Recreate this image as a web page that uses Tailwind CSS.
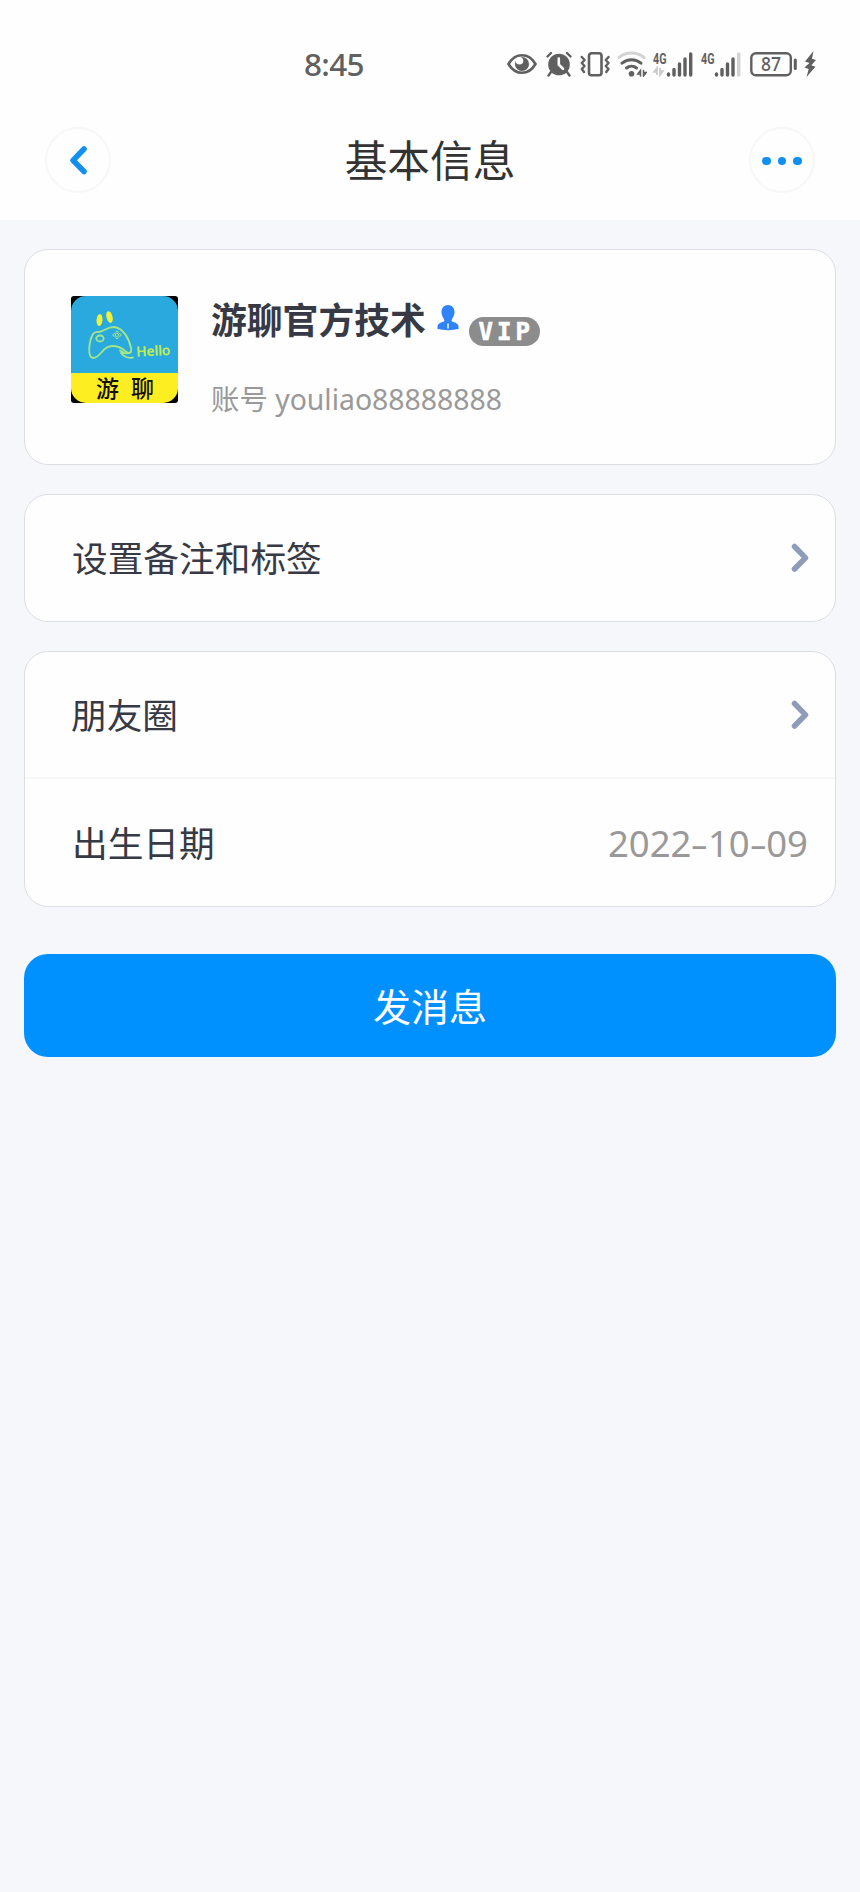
<!DOCTYPE html>
<html lang="zh-CN">

<head>
    <meta charset="UTF-8">
    <meta name="viewport" content="width=device-width, initial-scale=1.0">
    <script src="https://cdn.jsdelivr.net/npm/@tailwindcss/browser@4"></script>
    <title>基本信息</title>
</head>

<body class="bg-[#f5f7fb] min-h-screen text-[#373a44] font-['Noto_Sans','Noto_Sans_CJK_SC',sans-serif]">
    <header class="bg-[#fefefe] h-[220px]">
        <!-- Status bar -->
        <div class="flex items-center h-[127px] pl-[304px] pr-[44px] text-[#606060]">
            <span class="text-[31.5px] leading-none tracking-[-0.7px] font-medium">8:45</span>
            <div class="ml-auto flex items-center">
                <!-- Eye -->
                <svg class="w-[30px] h-[26px]" viewBox="0 0 30 26" fill="none">
                    <path d="M1.500 13C5 7 10 4.200 15 4.200S25 7 28.500 13C25 19 20 21.800 15 21.800S5 19 1.500 13Z" stroke="currentColor" stroke-width="2.600" />
                    <circle cx="15" cy="13" r="7" fill="currentColor" />
                    <circle cx="12.500" cy="9.800" r="3.800" fill="#fefefe" />
                </svg>
                <!-- Alarm -->
                <svg class="w-[26px] h-[26px] ml-[9px]" viewBox="0 0 26 26" fill="none" stroke-linecap="round">
                    <circle cx="13" cy="13.500" r="10.800" fill="currentColor" />
                    <path d="M1.500 5.500 5 2M24.500 5.500 21 2M5 21l-2.500 3.500M21 21l2.500 3.500" stroke="currentColor" stroke-width="2.400" />
                    <path d="M12.800 7.500v6.300l4.200 4" stroke="#fefefe" stroke-width="2.600" />
                </svg>
                <!-- Vibrate -->
                <svg class="w-[30px] h-[26px] ml-[8px]" viewBox="0 0 30 26" fill="none" stroke="currentColor" stroke-linejoin="round" stroke-linecap="round">
                    <rect x="9" y="2.300" width="12.500" height="22" rx="2.500" stroke-width="2.600" />
                    <path d="M1.800 6 4.500 9 1.800 12 4.500 15 1.800 18 4 21M28.500 6 25.800 9 28.500 12 25.800 15 28.500 18 26.300 21" stroke-width="2.400" />
                </svg>
                <!-- Wifi -->
                <svg class="w-[30px] h-[26px] ml-[7px]" viewBox="0 0 30 26" fill="none" stroke-linecap="round">
                    <path d="M2 6.500C9 .5 20 .5 27 6.500" stroke="#d3d3d3" stroke-width="3" />
                    <path d="M5 12.200C10.500 7.500 18.500 7.500 24 12.200M9.500 17C12.500 14.500 16.500 14.500 19.500 17" stroke="currentColor" stroke-width="3" />
                    <circle cx="14.500" cy="22.700" r="2.800" fill="currentColor" />
                    <path d="M23.500 25v-5.500L20.800 23h2.500M26.500 19.500V25l2.700-3.500h-2.500" stroke="currentColor" stroke-width="1.500" />
                </svg>
                <!-- Signal 1 -->
                <svg class="w-[40px] h-[26px] ml-[6px] overflow-visible" viewBox="0 0 40 26">
                    <text x="0" y="12.500" font-size="15.500" font-weight="700" fill="currentColor" textLength="13.500" lengthAdjust="spacingAndGlyphs" font-family="Roboto, sans-serif">4G</text>
                    <path d="M4 24v-7l-3 4h3M7 17v7l3-4H7" fill="none" stroke="#c9c9c9" stroke-width="1.700" />
                    <path d="M15.500 23v1M21 18.500V24M26.500 13V24M32 8V24M37.700 3V24" stroke="currentColor" stroke-width="3.400" stroke-linecap="round" />
                </svg>
                <!-- Signal 2 -->
                <svg class="w-[40px] h-[26px] ml-[8px] overflow-visible" viewBox="0 0 40 26">
                    <text x="0" y="12.500" font-size="15.500" font-weight="700" fill="currentColor" textLength="13.500" lengthAdjust="spacingAndGlyphs" font-family="Roboto, sans-serif">4G</text>
                    <path d="M15.500 23v1M21 18.500V24M26.500 13V24M32 8V24" stroke="currentColor" stroke-width="3.400" stroke-linecap="round" />
                    <path d="M37.700 3V24" stroke="#d3d3d3" stroke-width="3.400" stroke-linecap="round" />
                </svg>
                <!-- Battery -->
                <svg class="w-[48px] h-[26px] ml-[9px]" viewBox="0 0 48 26">
                    <rect x="1.300" y="2.300" width="39.500" height="22" rx="4.500" fill="none" stroke="currentColor" stroke-width="2.400" />
                    <text x="21" y="20" font-size="19" font-weight="500" fill="currentColor" text-anchor="middle" textLength="20" lengthAdjust="spacingAndGlyphs">87</text>
                    <path d="M45.300 9v8.500" stroke="currentColor" stroke-width="3" stroke-linecap="round" />
                </svg>
                <!-- Charging -->
                <svg class="w-[12px] h-[28px] ml-[6px]" viewBox="0 0 12 28" fill="currentColor">
                    <path d="M9.500 1 1 11.500l4.500 1.500L.5 17.500l4.200 1.500L2.500 27 11.500 16.800 7.300 15.300 12 10 8 8.800Z" />
                </svg>
            </div>
        </div>

        <!-- Title bar -->
        <div class="flex items-center justify-between h-[66px] px-[45px]">
            <button class="size-[66px] rounded-full border-2 border-[#f7f7f8] flex items-center justify-center">
                <svg class="w-[20px] h-[30px]" viewBox="0 0 20 30" fill="none" stroke="#1090f0" stroke-width="5.500" stroke-linecap="round" stroke-linejoin="round">
                    <path d="M16 4 5 15.300 16 26.500" />
                </svg>
            </button>
            <h1 class="text-[42.7px] leading-none text-[#333333] pt-[3px]">基本信息</h1>
            <button class="size-[66px] rounded-full border-2 border-[#f7f7f8] flex items-center justify-center gap-[7px] pt-[2px]">
                <span class="size-[8.5px] rounded-full bg-[#1090f0]"></span>
                <span class="size-[8.5px] rounded-full bg-[#1090f0]"></span>
                <span class="size-[8.5px] rounded-full bg-[#1090f0]"></span>
            </button>
        </div>
    </header>

    <main class="px-6 pt-[29px]">
        <!-- Profile -->
        <section class="h-[216px] bg-[#fefefe] border border-[#dcdee3] rounded-3xl flex pl-[46px] pt-[46px]">
            <svg class="size-[107px]" viewBox="0 0 107 107">
                <defs>
                    <clipPath id="logo"><rect width="107" height="107" rx="15" /></clipPath>
                </defs>
                <rect width="107" height="107" rx="3" fill="#000" />
                <g clip-path="url(#logo)">
                    <rect width="107" height="77" fill="#29a9dd" />
                    <rect y="77" width="107" height="30" fill="#fdee21" />
                </g>
                <ellipse cx="28.500" cy="24" rx="3" ry="6" fill="#f3f03a" transform="rotate(5 28.500 24)" />
                <ellipse cx="38.500" cy="21" rx="3" ry="6" fill="#f3f03a" transform="rotate(-15 38.500 21)" />
                <g fill="none" stroke="#a5e588" stroke-width="1.800" stroke-linecap="round">
                    <path d="M28 36C34 35 36 31 43 31C52 32 58 42 60 52C61 58 57 58 54 55C50 51 46 50 41 50C31 50 30 62 22 62C16 61 18 45 22 38C24 35 26 36 28 36Z" />
                    <ellipse cx="29" cy="42.500" rx="3.700" ry="3" />
                    <path d="M49 54.500C53 58 57 58 60 56M50 57C53 61 57 62.500 62 61.500" />
                </g>
                <g fill="none" stroke="#a5e588" stroke-width="1">
                    <circle cx="46" cy="36.500" r="1.300" />
                    <circle cx="46" cy="41.500" r="1.300" />
                    <circle cx="43.300" cy="39" r="1.300" />
                    <circle cx="48.700" cy="39" r="1.300" />
                </g>
                <text x="65.500" y="60.500" font-size="13.500" font-weight="500" fill="#c4ee4f" stroke="#c4ee4f" stroke-width=".3" textLength="34" lengthAdjust="spacingAndGlyphs" transform="rotate(-3 66 60)">Hello</text>
                <text x="25" y="101" font-size="23" font-weight="500" fill="#111">游</text>
                <text x="60" y="101" font-size="23" font-weight="500" fill="#111">聊</text>
            </svg>
            <div class="ml-[33px]">
                <div class="flex items-start h-[56px]">
                    <h2 class="text-[35.8px] leading-[49px] font-bold">游聊官方技术</h2>
                    <svg class="w-[22px] h-[27px] ml-[11px] mt-[8px]" viewBox="0 0 22 27">
                        <path d="M11 1C15 1 17.500 4 17.500 8C17.500 12 15 14 14.500 17C16 18.500 21.500 18.500 21.500 22.500V25C15 26.500 7 26.500 .5 25V22.500C.5 18.500 6 18.500 7.500 17C7 14 4.500 12 4.500 8C4.500 4 7 1 11 1Z" fill="#2f82f7" />
                        <path d="M11 19.500v5" stroke="#b9e1f5" stroke-width="2" />
                    </svg>
                    <span class="w-[71px] h-[29px] ml-[10px] mt-[21px] rounded-full bg-[#8c8c8c] text-white flex items-center justify-center pl-[4px] text-[24px] leading-none font-bold tracking-[4px] font-['DejaVu_Sans_Mono',monospace] [-webkit-text-stroke:0.6px_white]">VIP</span>
                </div>
                <p class="mt-[25px] text-[#999999] text-[28.4px] leading-[44px] whitespace-nowrap">账号 youliao88888888</p>
            </div>
        </section>

        <section class="mt-[29px] h-[128px] bg-[#fefefe] border border-[#dcdee3] rounded-3xl flex items-center justify-between pl-[47px] pr-[25px] text-[35.7px] leading-none">
            <span class="pt-[2px]">设置备注和标签</span>
            <svg class="w-[20px] h-[32px]" viewBox="0 0 20 32" fill="none" stroke="#8e9cb9" stroke-width="5.500" stroke-linecap="round" stroke-linejoin="round">
                <path d="M4.500 4.500 15.500 15.800 4.500 27" />
            </svg>
        </section>

        <section class="mt-[29px] h-[256px] bg-[#fefefe] border border-[#dcdee3] rounded-3xl text-[35.7px] leading-none">
            <div class="h-[127px] border-b-2 border-[#f6f7f8] flex items-center justify-between pl-[46px] pr-[25px]">
                <span class="pt-[2px]">朋友圈</span>
                <svg class="w-[20px] h-[32px]" viewBox="0 0 20 32" fill="none" stroke="#8e9cb9" stroke-width="5.500" stroke-linecap="round" stroke-linejoin="round">
                    <path d="M4.500 4.500 15.500 15.800 4.500 27" />
                </svg>
            </div>
            <div class="h-[127px] flex items-center justify-between pl-[47px] pr-[27px]">
                <span class="pt-[2px]">出生日期</span>
                <span class="pt-[2px] text-[36.5px] text-[#999999]">2022<span class="inline-block w-[16.5px] text-center scale-x-150">-</span>10<span class="inline-block w-[16.5px] text-center scale-x-150">-</span>09</span>
            </div>
        </section>

        <button class="mt-[47px] w-full h-[103px] rounded-3xl bg-[#0091ff] text-white text-[38px] leading-none flex items-center justify-center">发消息</button>
    </main>
</body>

</html>
